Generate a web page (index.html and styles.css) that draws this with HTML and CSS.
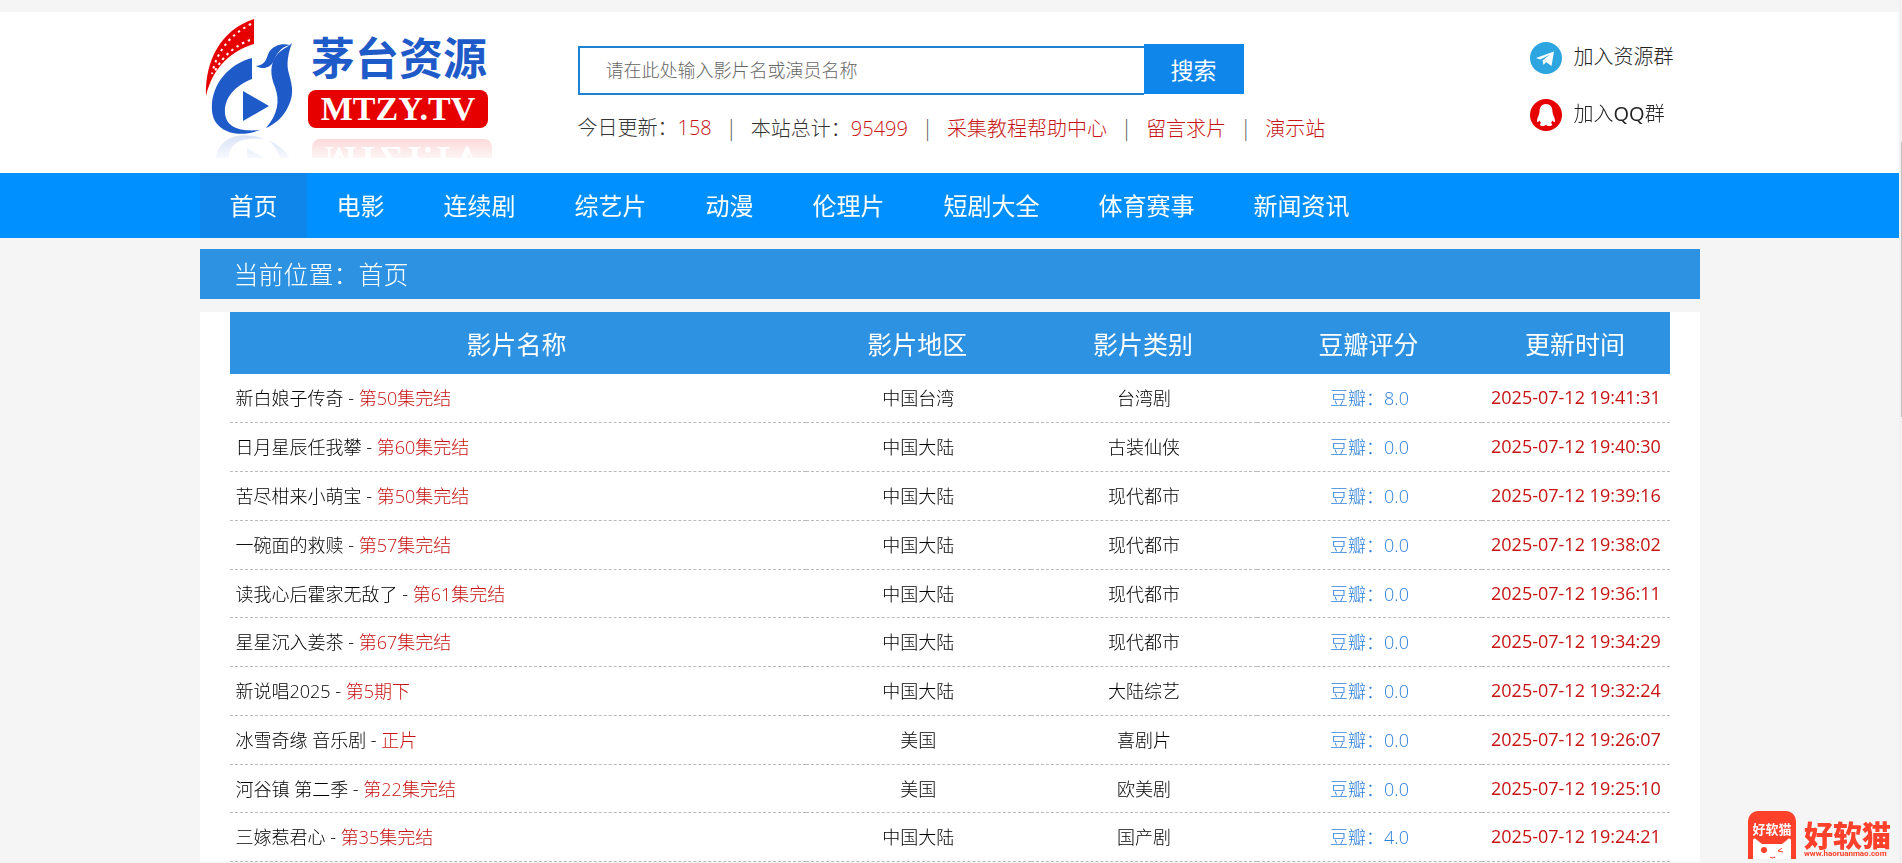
FILE: index.html
```
<!DOCTYPE html>
<html lang="zh-CN">
<head>
    <meta charset="UTF-8">
    <meta name="viewport" content="width=device-width, initial-scale=1.0">
    <title>茅台资源</title>
    <link rel="stylesheet" href="styles.css">
</head>
<body>
    <header class="header">
        <div class="container header-inner">
            <a class="logo" href="#" aria-label="茅台资源">
                <svg width="300" height="150" viewBox="0 0 300 150">
                    <defs>
                        <linearGradient id="fade" x1="0" y1="0" x2="0" y2="1">
                            <stop offset="0" stop-color="#fff" stop-opacity="0.18"/>
                            <stop offset="1" stop-color="#fff" stop-opacity="0.04"/>
                        </linearGradient>
                        <mask id="reflection" maskUnits="userSpaceOnUse" x="0" y="120" width="300" height="26">
                            <rect x="0" y="121" width="300" height="25" fill="url(#fade)"/>
                        </mask>
                        <g id="mark">
                            <path d="M54 7V32C33 38 13 54 6 84C5 48 21 18 54 7Z" fill="#e60000"/>
                            <path d="M51 12C30 23 17 39 12 62M50 28C37 33 24 42 15 59" fill="none" stroke="#fff" stroke-width="2" stroke-dasharray="2.4 4"/>
                            <path d="M52 46V67C34 74 24 87 25 101C26 115 39 120 60 118C38 127 14 120 12 99C10 74 28 52 52 46Z" fill="#1f5bc8"/>
                            <path d="M43 79L69 94L43 109Z" fill="#1f5bc8"/>
                            <path d="M56 54C65 53 66 48 69 40C74 33 82 31 90 33C81 35 76 42 74 49C70 56 63 58 56 54Z" fill="#1f5bc8"/>
                            <path d="M92 31C88 42 86 52 89 62C93 76 94 84 87 97C82 106 75 112 66 116C78 102 80 89 75 75C70 63 70 53 76 44C81 37 87 36 92 31Z" fill="#1f5bc8"/>
                        </g>
                        <g id="plate">
                            <rect x="108" y="78" width="180" height="38" rx="8" fill="#e60000"/>
                            <text class="logo-domain" x="198" y="108" text-anchor="middle">MTZY.TV</text>
                        </g>
                    </defs>
                    <use href="#mark"/>
                    <text class="logo-name" x="199" y="63" text-anchor="middle">茅台资源</text>
                    <use href="#plate"/>
                    <g mask="url(#reflection)">
                        <use href="#mark" transform="translate(4 245) scale(1 -1)"/>
                        <use href="#plate" transform="translate(4 243) scale(1 -1)"/>
                    </g>
                </svg>
            </a>
            <div class="search">
                <form class="search-form">
                    <input type="text" class="search-input" aria-label="搜索影片" placeholder="请在此处输入影片名或演员名称">
                    <button type="submit" class="search-button">搜索</button>
                </form>
                <ul class="stats">
                    <li>今日更新：<span class="red">158</span></li>
                    <li>本站总计：<span class="red">95499</span></li>
                    <li><a class="red" href="#">采集教程帮助中心</a></li>
                    <li><a class="red" href="#">留言求片</a></li>
                    <li><a class="red" href="#">演示站</a></li>
                </ul>
            </div>
            <div class="groups">
                <a class="group" href="#">
                    <svg width="32" height="32" viewBox="0 0 32 32">
                        <circle cx="16" cy="16" r="16" fill="#2ca5e0"/>
                        <path d="M6 16L24 9.500L21.500 24L16 20L13.500 23L12.500 18.500L20 12.500L10.500 17.500Z" fill="#fff"/>
                    </svg>
                    <span>加入资源群</span>
                </a>
                <a class="group" href="#">
                    <svg width="32" height="32" viewBox="0 0 32 32">
                        <circle cx="16" cy="16" r="16" fill="#e60000"/>
                        <path d="M16 5C11 5 9.500 9 9.500 13C9.500 16 7 18 7 22C7 23.500 8 23.500 9.500 21.500L11 24C9 25.500 10 27 12.500 27C14.500 27 15 26.500 16 26C17 26.500 17.500 27 19.500 27C22 27 23 25.500 21 24L22.500 21.500C24 23.500 25 23.500 25 22C25 18 22.500 16 22.500 13C22.500 9 21 5 16 5Z" fill="#fff"/>
                    </svg>
                    <span>加入<b>QQ</b>群</span>
                </a>
            </div>
        </div>
    </header>

    <nav class="nav">
        <div class="container nav-inner">
            <a class="nav-link active" href="#">首页</a>
            <a class="nav-link" href="#">电影</a>
            <a class="nav-link" href="#">连续剧</a>
            <a class="nav-link" href="#">综艺片</a>
            <a class="nav-link" href="#">动漫</a>
            <a class="nav-link" href="#">伦理片</a>
            <a class="nav-link" href="#">短剧大全</a>
            <a class="nav-link" href="#">体育赛事</a>
            <a class="nav-link" href="#">新闻资讯</a>
        </div>
    </nav>

    <div class="container position">当前位置：首页</div>

    <main class="container content">
        <table class="movies">
            <thead>
                <tr>
                    <th class="col-name">影片名称</th>
                    <th class="col-info">影片地区</th>
                    <th class="col-info">影片类别</th>
                    <th class="col-info">豆瓣评分</th>
                    <th class="col-time">更新时间</th>
                </tr>
            </thead>
            <tbody>
                <tr>
                    <td><a href="#">新白娘子传奇 - <span class="red">第50集完结</span></a></td>
                    <td>中国台湾</td>
                    <td>台湾剧</td>
                    <td class="score">豆瓣：8.0</td>
                    <td class="time">2025-07-12 19:41:31</td>
                </tr>
                <tr>
                    <td><a href="#">日月星辰任我攀 - <span class="red">第60集完结</span></a></td>
                    <td>中国大陆</td>
                    <td>古装仙侠</td>
                    <td class="score">豆瓣：0.0</td>
                    <td class="time">2025-07-12 19:40:30</td>
                </tr>
                <tr>
                    <td><a href="#">苦尽柑来小萌宝 - <span class="red">第50集完结</span></a></td>
                    <td>中国大陆</td>
                    <td>现代都市</td>
                    <td class="score">豆瓣：0.0</td>
                    <td class="time">2025-07-12 19:39:16</td>
                </tr>
                <tr>
                    <td><a href="#">一碗面的救赎 - <span class="red">第57集完结</span></a></td>
                    <td>中国大陆</td>
                    <td>现代都市</td>
                    <td class="score">豆瓣：0.0</td>
                    <td class="time">2025-07-12 19:38:02</td>
                </tr>
                <tr>
                    <td><a href="#">读我心后霍家无敌了 - <span class="red">第61集完结</span></a></td>
                    <td>中国大陆</td>
                    <td>现代都市</td>
                    <td class="score">豆瓣：0.0</td>
                    <td class="time">2025-07-12 19:36:11</td>
                </tr>
                <tr>
                    <td><a href="#">星星沉入姜茶 - <span class="red">第67集完结</span></a></td>
                    <td>中国大陆</td>
                    <td>现代都市</td>
                    <td class="score">豆瓣：0.0</td>
                    <td class="time">2025-07-12 19:34:29</td>
                </tr>
                <tr>
                    <td><a href="#">新说唱2025 - <span class="red">第5期下</span></a></td>
                    <td>中国大陆</td>
                    <td>大陆综艺</td>
                    <td class="score">豆瓣：0.0</td>
                    <td class="time">2025-07-12 19:32:24</td>
                </tr>
                <tr>
                    <td><a href="#">冰雪奇缘 音乐剧 - <span class="red">正片</span></a></td>
                    <td>美国</td>
                    <td>喜剧片</td>
                    <td class="score">豆瓣：0.0</td>
                    <td class="time">2025-07-12 19:26:07</td>
                </tr>
                <tr>
                    <td><a href="#">河谷镇 第二季 - <span class="red">第22集完结</span></a></td>
                    <td>美国</td>
                    <td>欧美剧</td>
                    <td class="score">豆瓣：0.0</td>
                    <td class="time">2025-07-12 19:25:10</td>
                </tr>
                <tr>
                    <td><a href="#">三嫁惹君心 - <span class="red">第35集完结</span></a></td>
                    <td>中国大陆</td>
                    <td>国产剧</td>
                    <td class="score">豆瓣：4.0</td>
                    <td class="time">2025-07-12 19:24:21</td>
                </tr>
            </tbody>
        </table>
    </main>

    <div class="scrollbar"><div class="scrollbar-thumb"></div></div>

    <a class="watermark" href="#">
        <svg width="48" height="48" viewBox="0 0 48 48">
            <rect width="48" height="60" rx="10" fill="#ff402b"/>
            <text class="watermark-badge" x="24" y="23" text-anchor="middle">好软猫</text>
            <path d="M5 48V30C5 27 7 27 9 29L14 33H34L39 29C41 27 43 27 43 30V48Z" fill="#fff"/>
            <circle cx="16" cy="39" r="3" fill="#ff402b"/>
            <path d="M34 37L30 40L35 41M22 46Q24 48 27 46" fill="none" stroke="#ff402b" stroke-width="1"/>
        </svg>
        <span class="watermark-text">
            <strong>好软猫</strong>
            <small>www.haoruanmao.com</small>
        </span>
    </a>
</body>
</html>
```
FILE: styles.css
```
* {
    box-sizing: border-box;
}
body {
    margin: 0;
    padding: 12px 3px 0 0;
    background-color: #f5f5f5;
    color: #000;
    font-family: "Open Sans", "Noto Sans CJK SC", sans-serif;
    font-size: 18px;
    font-weight: 300;
    height: 100vh;
    overflow: hidden;
}
a {
    color: inherit;
    text-decoration: none;
}
.container {
    width: 100%;
    max-width: 1500px;
    margin: 0 auto;
}
.red {
    color: #c81414;
}

/* header */
.header {
    background-color: #fff;
}
.header-inner {
    display: flex;
    height: 161px;
}
.logo {
    width: 378px;
}
.logo svg {
    display: block;
}
.logo-name {
    fill: #1f5bc8;
    font-family: "Noto Sans CJK SC", sans-serif;
    font-size: 44px;
    font-weight: 700;
}
.logo-domain {
    fill: #fff;
    font-family: "Liberation Serif", serif;
    font-size: 34px;
    font-weight: 700;
}
.search {
    flex: 1;
    padding-top: 32px;
}
.search-form {
    display: flex;
    align-items: flex-start;
}
.search-input {
    width: 566px;
    height: 49px;
    margin-top: 2px;
    padding: 0 26px 2px;
    border: 2px solid #1e82d2;
    border-right: none;
    background-color: #fff;
    font: inherit;
}
.search-input::placeholder {
    color: #666;
}
.search-button {
    width: 100px;
    height: 50px;
    padding: 0;
    border: none;
    background-color: #0e86ea;
    color: #fff;
    font: inherit;
    font-size: 23px;
    font-weight: 400;
    cursor: pointer;
}
.stats {
    display: flex;
    margin: 17px 0 0;
    padding: 0;
    list-style: none;
    color: #333;
    font-size: 20px;
    line-height: 32px;
}
.stats li + li::before {
    content: "|";
    margin: 0 17px;
    color: #555;
    font-family: "Noto Sans CJK SC", sans-serif;
}
.groups {
    width: 170px;
    padding-top: 30px;
    color: #222;
    font-size: 20px;
    line-height: 30px;
}
.group {
    display: flex;
    gap: 12px;
    margin-bottom: 25px;
}
.group b {
    font-weight: 400;
}

/* nav */
.nav {
    background-color: #0090ff;
}
.nav-inner {
    display: flex;
}
.nav-link {
    padding: 0 29px 0 30px;
    color: #fff;
    font-size: 24px;
    font-weight: 400;
    line-height: 65px;
}
.nav-link.active {
    background-color: #0e86ea;
}

.position {
    margin-top: 11px;
    padding: 0 34px;
    background-color: #2d92e1;
    color: #fff;
    font-size: 25px;
    line-height: 50px;
}

/* movie list */
.content {
    margin-top: 13px;
    padding: 0 30px;
    background-color: #fff;
}
.movies {
    width: 100%;
    border-spacing: 0;
    table-layout: fixed;
}
.movies th {
    height: 62px;
    padding: 0 2px 0 0;
    background-color: #2d92e1;
    color: #fff;
    font-size: 25px;
    font-weight: 400;
}
.movies td {
    height: 49px;
    padding: 0 0 2px;
    border-bottom: 1px dashed #bbb;
    text-align: center;
}
.movies tr:nth-child(4n+5) td {
    height: 48px;
}
.movies td:first-child {
    padding-left: 6px;
    text-align: left;
}
.col-name {
    width: 40%;
}
.col-time {
    width: 13%;
}
.movies .score {
    color: #2d7fd8;
}
.movies .time {
    color: #c81414;
    font-weight: 400;
}

/* page scrollbar */
.scrollbar {
    position: fixed;
    top: 0;
    right: 0;
    width: 3px;
    height: 100%;
    padding: 142px 0 0 2px;
    background-color: #f1f1f1;
}
.scrollbar-thumb {
    height: 275px;
    background-color: #c1c1c1;
}

/* corner logo */
.watermark {
    position: fixed;
    right: 11px;
    bottom: 4px;
    display: flex;
    align-items: flex-end;
    gap: 8px;
    color: #ff402b;
}
.watermark svg {
    display: block;
}
.watermark-badge {
    fill: #fff;
    font-size: 13px;
    font-weight: 700;
}
.watermark-text strong {
    display: block;
    font-size: 29px;
    font-weight: 900;
    line-height: 26px;
}
.watermark-text small {
    display: block;
    font-family: Roboto, sans-serif;
    font-size: 8px;
    font-weight: 700;
    line-height: 10px;
}
```
